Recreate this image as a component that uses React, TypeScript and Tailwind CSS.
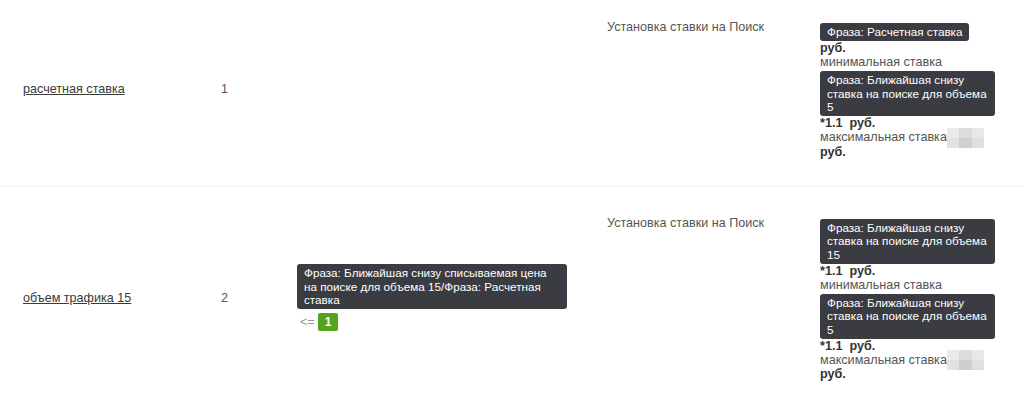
import React from 'react';

const Badge = ({ children, className = '' }: { children: React.ReactNode; className?: string }) => (
  <div className={`inline-block rounded-[3px] bg-[#3b3c41] px-[7px] pt-[2px] pb-[2.5px] text-white text-[11.7px] leading-[13.5px] ${className}`}>
    {children}
  </div>
);

const Blurred = () => (
  <span className="inline-grid grid-cols-3 grid-rows-2 w-[37px] h-[20px] align-middle -my-[3px]">
    <span className="bg-[#ebebeb]" />
    <span className="bg-[#dcdcdc]" />
    <span className="bg-[#e8e8e8]" />
    <span className="bg-[#e2e2e2]" />
    <span className="bg-[#cfcfcf]" />
    <span className="bg-[#e0e0e0]" />
  </span>
);

type Row = {
  name: string;
  num: number;
  condition?: { phrase: string; value: string };
  minPhrase: string;
  minValue: string;
};

const rows: Row[] = [
  {
    name: 'расчетная ставка',
    num: 1,
    minPhrase: 'Фраза: Расчетная ставка',
    minValue: '',
  },
  {
    name: 'объем трафика 15',
    num: 2,
    condition: {
      phrase: 'Фраза: Ближайшая снизу списываемая цена на поиске для объема 15/Фраза: Расчетная ставка',
      value: '1',
    },
    minPhrase: 'Фраза: Ближайшая снизу ставка на поиске для объема 15',
    minValue: '*1.1  ',
  },
];

export default function App() {
  return (
    <div className="min-h-screen bg-white text-[12.6px] leading-[14px] text-[#555] overflow-hidden" style={{ fontFamily: '"Liberation Sans", Arial, sans-serif' }}>
      <div className="-mt-[9px]">
        {rows.map((r) => (
          <div
            key={r.name}
            className="grid grid-cols-[198px_76px_310px_213px_175px] pl-[23px] border-b border-[#f3f3f3]"
          >
            <div className="self-center pt-[1px]">
              <a href="#" className="text-[#3a3a3a] underline">{r.name}</a>
            </div>
            <div className="self-center pt-[1px]">{r.num}</div>
            <div className="self-center">
              {r.condition && (
                <div>
                  <Badge className="max-w-[270px]">{r.condition.phrase}</Badge>
                  <div className="mt-[4px] flex items-center gap-[3px] pl-[3px] text-[#999]">
                    <span>&lt;=</span>
                    <span className="inline-block rounded-[2px] bg-[#52a31d] px-[7px] py-[2px] font-bold text-[12px] text-white">{r.condition.value}</span>
                  </div>
                </div>
              )}
            </div>
            <div className="self-start pt-[29px]">Установка ставки на Поиск</div>
            <div className="self-start pt-[32px] pb-[27px]">
              <Badge>{r.minPhrase}</Badge>
              <div className="font-bold text-[#333] whitespace-pre">{r.minValue}руб.</div>
              <div>минимальная ставка</div>
              <Badge className="mt-[2px]">Фраза: Ближайшая снизу ставка на поиске для объема 5</Badge>
              <div className="font-bold text-[#333] whitespace-pre">*1.1  руб.</div>
              <div>
                максимальная ставка
                <Blurred />
              </div>
              <div className="font-bold text-[#333]">руб.</div>
            </div>
          </div>
        ))}
      </div>
    </div>
  );
}
